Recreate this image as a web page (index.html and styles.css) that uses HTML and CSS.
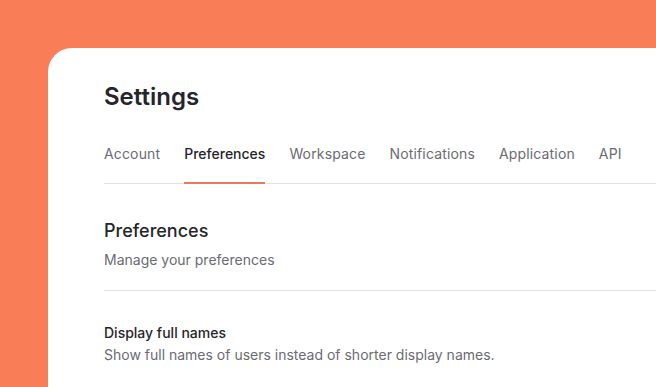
FILE: index.html
```html
<!DOCTYPE html>
<html>
<head>
<meta charset="utf-8">
<link rel="stylesheet" href="styles.css">
</head>
<body>
<div class="card">
  <h1 class="title">Settings</h1>
  <nav class="tabs">
    <a class="tab">Account</a>
    <a class="tab active">Preferences</a>
    <a class="tab">Workspace</a>
    <a class="tab">Notifications</a>
    <a class="tab">Application</a>
    <a class="tab">API</a>
  </nav>
  <section class="section">
    <h2 class="section-title">Preferences</h2>
    <p class="section-desc">Manage your preferences</p>
  </section>
  <div class="setting">
    <div class="setting-label">Display full names</div>
    <div class="setting-desc">Show full names of users instead of shorter display names.</div>
  </div>
</div>
</body>
</html>
```
FILE: styles.css
```css
html, body {
  margin: 0;
  padding: 0;
}
body {
  background: #f97d57;
  font-family: Inter, "Noto Sans", sans-serif;
  height: 387px;
  overflow: hidden;
}
.card {
  margin: 48px 0 0 48px;
  background: #ffffff;
  border-top-left-radius: 24px;
  padding: 33px 0 0 56px;
  height: 306px;
}
.title {
  margin: 0;
  font-size: 24px;
  line-height: 32px;
  font-weight: 600;
  color: #25252b;
}
.tabs {
  display: flex;
  gap: 24px;
  margin-top: 31px;
  border-bottom: 1px solid #e2e2e4;
}
.tab {
  font-size: 14px;
  line-height: 20px;
  color: #6b6b72;
  letter-spacing: 0.15px;
  padding-bottom: 18px;
  margin-bottom: -1px;
  border-bottom: 2px solid transparent;
}
.tab.active {
  color: #25252b;
  font-weight: 500;
  letter-spacing: 0;
  border-bottom-color: #e8795a;
}
.section {
  padding: 35px 0 20px;
  border-bottom: 1px solid #e2e2e4;
}
.section-title {
  margin: 0;
  font-size: 18px;
  line-height: 24px;
  font-weight: 500;
  color: #25252b;
}
.section-desc {
  margin: 7px 0 0;
  font-size: 14px;
  line-height: 20px;
  color: #6b6b72;
}
.setting {
  padding-top: 32px;
}
.setting-label {
  font-size: 14px;
  line-height: 20px;
  font-weight: 500;
  color: #25252b;
}
.setting-desc {
  margin-top: 2px;
  font-size: 14px;
  line-height: 20px;
  color: #6b6b72;
}
```
